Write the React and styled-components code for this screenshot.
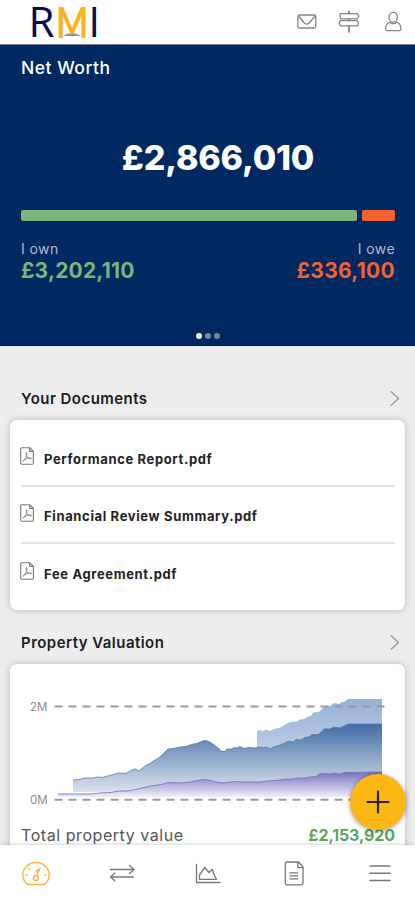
import React from 'react';
import styled, { createGlobalStyle } from 'styled-components';

const GlobalStyle = createGlobalStyle`
  * {
    box-sizing: border-box;
  }
  body {
    margin: 0;
    font-family: Inter, 'Liberation Sans', sans-serif;
    background: #ededed;
  }
`;
const Screen = styled.div`
  position: relative;
  display: flex;
  flex-direction: column;
  width: 415px;
  height: 900px;
  overflow: hidden;
  background: #ededed;
`;
const Header = styled.header`
  flex: none;
  display: flex;
  align-items: center;
  justify-content: space-between;
  height: 45px;
  padding: 0 10px 0 30px;
  background: #fff;
  border-bottom: 1px solid #777589;
`;
const LogoMark = styled.svg`
  display: block;
  overflow: visible;
  font-family: 'Open Sans', sans-serif;
  font-size: 41.5px;
  fill: #0d0a4e;
`;
const HeaderIcons = styled.div`
  display: flex;
  align-items: center;
  gap: 20px;
`;
const Icon = styled.svg`
  display: block;
  flex: none;
  fill: none;
  stroke: ${({ $color }) => $color || '#858585'};
  stroke-width: ${({ $weight }) => $weight || 1.3};
  stroke-linecap: round;
  stroke-linejoin: round;
`;
const Hero = styled.section`
  flex: none;
  display: flex;
  flex-direction: column;
  height: 301px;
  padding: 12px 20px 6px 21px;
  color: #fff;
  background: #002861;
  border-bottom: 1px solid #00104d;
`;
const HeroTitle = styled.div`
  font-size: 17.5px;
  font-weight: 500;
  line-height: 22px;
  letter-spacing: 0.5px;
`;
const NetWorth = styled.div`
  margin-top: 58px;
  padding-left: 20px;
  font-size: 34px;
  font-weight: 800;
  line-height: 42px;
  letter-spacing: -0.2px;
  text-align: center;
`;
const Bar = styled.div`
  display: flex;
  gap: 5px;
  margin-top: 31px;
`;
const BarPart = styled.div`
  flex: ${({ $share }) => $share} 0 0;
  height: 11px;
  border-radius: 2px;
  background: ${({ $color }) => $color};
`;
const Totals = styled.div`
  display: flex;
  justify-content: space-between;
  margin-top: 18px;
`;
const Total = styled.div`
  text-align: ${({ $align }) => $align};
`;
const TotalLabel = styled.div`
  font-size: 14px;
  line-height: 20px;
  letter-spacing: 0.4px;
  color: #b3bbd0;
`;
const TotalValue = styled.div`
  font-size: 21px;
  font-weight: 700;
  line-height: 24px;
  letter-spacing: ${({ $spacing }) => $spacing};
  color: ${({ $color }) => $color};
`;
const Dots = styled.div`
  display: flex;
  justify-content: center;
  gap: 3px;
  margin-top: auto;
`;
const Dot = styled.span`
  width: 6px;
  height: 6px;
  border-radius: 50%;
  background: ${({ $active }) => ($active ? '#fff' : '#7a8596')};
`;
const SectionHeader = styled.div`
  flex: none;
  display: flex;
  align-items: center;
  justify-content: space-between;
  height: 24px;
  margin-top: ${({ $top }) => $top};
  padding: 0 15px 0 21px;
`;
const SectionTitle = styled.h2`
  margin: 0;
  font-size: 15px;
  font-weight: 600;
  letter-spacing: 0.46px;
  color: #1c1c1f;
`;
const Card = styled.div`
  flex: none;
  height: ${({ $height }) => $height};
  margin: 10px 10px 0;
  padding: 0 10px 0 11px;
  border-radius: 7px;
  background: #fff;
  box-shadow: 0 0 7px rgba(0, 0, 0, 0.22);
`;
const DocumentCard = styled(Card)`
  display: flex;
  flex-direction: column;
  padding-top: 9px;
`;
const DocumentRow = styled.div`
  display: flex;
  align-items: center;
  gap: 10px;
  height: 57.5px;
  border-bottom: 2px solid ${({ $last }) => ($last ? 'transparent' : '#e4e4e4')};

  svg {
    margin: 0 0 2px -1px;
  }
`;
const DocumentName = styled.span`
  padding-top: 4px;
  font-size: 13px;
  font-weight: 650;
  letter-spacing: 0.64px;
  color: #222226;
`;
const Chart = styled.svg`
  display: block;
  margin: 0 -10px 0 -11px;
`;
const ChartLabel = styled.text`
  font-size: 11.5px;
  fill: #8c8c8c;
`;
const ValueRow = styled.div`
  display: flex;
  justify-content: space-between;
  align-items: center;
  height: 24px;
`;
const ValueLabel = styled.span`
  font-size: 16px;
  letter-spacing: 0.56px;
  color: #555;
`;
const ValueAmount = styled.span`
  font-size: 16px;
  font-weight: 650;
  letter-spacing: -0.1px;
  color: #5ba65c;
`;
const AddButton = styled.button`
  position: absolute;
  right: 9px;
  bottom: 70px;
  display: flex;
  align-items: center;
  justify-content: center;
  width: 56px;
  height: 56px;
  padding: 0;
  border: none;
  border-radius: 50%;
  background: #fdb714;
  box-shadow: 0 1px 5px rgba(0, 0, 0, 0.4);
`;
const TabBar = styled.nav`
  position: absolute;
  left: 0;
  right: 0;
  bottom: 0;
  display: flex;
  align-items: center;
  justify-content: space-between;
  height: 55px;
  padding: 2px 21px 0 22px;
  background: #fff;
  box-shadow: 0 0 4px rgba(0, 0, 0, 0.25);
`;

const documents = ['Performance Report.pdf', 'Financial Review Summary.pdf', 'Fee Agreement.pdf'];

// upper edges of the three areas
const equity =
  '257,731 259,730 263,731 266,729.5 270,731 274,729 279,728 283,726 286,724 290,722 297,721.5 300,719.5 304,719 308,716.5 311,716 313,712.5 319,712 322,709 325,706.5 330,706 334,703 339,704 342,702 344,702 348,699 382,699';
const value =
  '73,780 80,779.5 85,778 94,778 97,777 102,777.5 108,776 112,775 118,773 126,773.5 130,771 135,769 139,771 145,766 149,764 155,760 160,757 164,753 168,749 173,748.5 180,747 186,746.5 193,744 197,743.5 204,740.5 208,741 213,744 218,748 222,751.5 225,751.5 227,749 232,749 234,747.5 237,748 240,746.5 244,748.5 249,747.5 255,748 260,747 263,748 267,747 270,749 274,747 280,745 286,742.5 288,741 293,742 296,739.5 301,740 305,737.5 309,737 312,734.5 318,734.5 322,731.5 324,729 330,729 334,727 340,728 344,726 348,724 382,724';
const debt =
  '58,794 90,794 100,793 110,792.5 120,791 128,791 136,789.5 142,788 150,786 158,785 163,784 168,782.5 180,783 190,782 197,780.5 205,779.5 211,780.5 216,782 223,783 230,782 235,781.5 240,782 250,782 260,782 268,781 280,780 288,779 293,779 298,778 304,778 310,777 316,776.5 319,774 325,773.5 329,774 334,773 340,774 344,772.5 382,772';

const Logo = () => (
  <LogoMark width="70" height="44" viewBox="30 0 70 44">
    <text x="28.5" y="37.3" textLength="26" lengthAdjust="spacingAndGlyphs">R</text>
    <text x="56" y="38" fontFamily="Lato" fontSize="42.5" fontWeight="700" fill="#fbb21c" textLength="32.4" lengthAdjust="spacingAndGlyphs">M</text>
    <text x="88.5" y="37.3" fontWeight="500">I</text>
    <path d="M63 36.300Q68 32 71.500 34.300Q76 32 81 36.300Q76 35.300 72 36.300Q68 35.300 63 36.300Z" fill="#8d8d93" />
  </LogoMark>
);

const Chevron = () => (
  <Icon width="10" height="17" viewBox="0 0 10 17" $color="#999" $weight={1.4}>
    <path d="M1.2 1.8 8.5 8.5 1.2 15.2" />
  </Icon>
);

const PdfIcon = () => (
  <Icon width="14" height="18" viewBox="0 0 14 18" $color="#777" $weight={1.1}>
    <path d="M2 .7h7.800l3.600 3.600v11.800q0 1.200-1.200 1.200H2q-1.300 0-1.300-1.200V2Q.7.7 2 .7ZM9.700.8v3.600h3.600" />
    <path d="M3.200 14c2.200-1.200 4-4.200 3.700-7.700-.1-1-1.200-.8-1 .4.500 3 2.300 4.800 5 5.200 1 .1.800-1-.3-1-2.600 0-5 .7-7.400 3.100Z" strokeWidth=".8" />
  </Icon>
);

const PropertyChart = () => (
  <Chart width="395" height="159" viewBox="10 664 395 159">
    <defs>
      <linearGradient id="equity" x1="0" y1="699" x2="0" y2="748" gradientUnits="userSpaceOnUse">
        <stop offset="0" stopColor="#97b1d7" />
        <stop offset="1" stopColor="#b9cbe4" />
      </linearGradient>
      <linearGradient id="value" x1="0" y1="724" x2="0" y2="796" gradientUnits="userSpaceOnUse">
        <stop offset="0" stopColor="#436ca5" />
        <stop offset="1" stopColor="#e3eaf1" />
      </linearGradient>
      <linearGradient id="debt" x1="0" y1="772" x2="0" y2="798" gradientUnits="userSpaceOnUse">
        <stop offset="0" stopColor="#7672be" />
        <stop offset="1" stopColor="#f6f3fc" />
      </linearGradient>
    </defs>
    <polygon points={`${equity} 382,775 257,775`} fill="url(#equity)" />
    <polygon points={`${value} 382,790 73,792`} fill="url(#value)" />
    <polygon points={`${debt} 382,797 58,797`} fill="url(#debt)" />
    <polyline points={value} fill="none" stroke="#5878a8" strokeWidth=".8" />
    <polyline points={debt} fill="none" stroke="#7975c0" strokeWidth=".9" />
    <path d="M54.5 706.5H386M54.5 799.8H386" stroke="#999" strokeWidth="2" strokeDasharray="8 6" />
    <ChartLabel x="30" y="711">2M</ChartLabel>
    <ChartLabel x="30" y="804">0M</ChartLabel>
  </Chart>
);

const App = () => (
  <Screen>
    <GlobalStyle />
    <Header>
      <Logo />
      <HeaderIcons>
        <Icon width="20" height="16" viewBox="0 0 20 16">
          <rect x=".8" y="1" width="18" height="13" rx="1.5" />
          <path d="M2 2.500 7.300 9Q9.800 11.200 12.300 9L17.600 2.500" />
        </Icon>
        <Icon width="24" height="24" viewBox="0 0 24 24">
          <path d="M12 1.300v2.400M12 9v1.500M12 16v6" stroke="#555" />
          <path d="M3.500 3.600h16.800l1.700 2.600-1.700 2.600H3.500Q2.300 6.200 3.500 3.600ZM20.500 10.600H3.700L2 13.200l1.700 2.600h16.800Q21.700 13.200 20.500 10.600Z" />
        </Icon>
        <Icon width="24" height="22" viewBox="0 0 24 22">
          <ellipse cx="12.200" cy="6.200" rx="4.200" ry="4.900" />
          <path d="M8.800 11.200C6 12 4.700 14.500 4.700 18.200q0 1.500 1.500 1.500h12.200q1.500 0 1.500-1.500c0-3.700-1.300-6.200-4.200-7Q12.200 14 8.800 11.200Z" />
        </Icon>
      </HeaderIcons>
    </Header>
    <Hero>
      <HeroTitle>Net Worth</HeroTitle>
      <NetWorth>£2,866,010</NetWorth>
      <Bar>
        <BarPart $share={336} $color="#7bb77c" />
        <BarPart $share={33} $color="#f2632f" />
      </Bar>
      <Totals>
        <Total $align="left">
          <TotalLabel>I own</TotalLabel>
          <TotalValue $color="#78b77b" $spacing="0.2px">£3,202,110</TotalValue>
        </Total>
        <Total $align="right">
          <TotalLabel>I owe</TotalLabel>
          <TotalValue $color="#f2632f" $spacing="0.3px">£336,100</TotalValue>
        </Total>
      </Totals>
      <Dots>
        <Dot $active />
        <Dot />
        <Dot />
      </Dots>
    </Hero>
    <SectionHeader $top="40px">
      <SectionTitle>Your Documents</SectionTitle>
      <Chevron />
    </SectionHeader>
    <DocumentCard $height="190px">
      {documents.map((name, i) => (
        <DocumentRow key={name} $last={i === documents.length - 1}>
          <PdfIcon />
          <DocumentName>{name}</DocumentName>
        </DocumentRow>
      ))}
    </DocumentCard>
    <SectionHeader $top="20px">
      <SectionTitle>Property Valuation</SectionTitle>
      <Chevron />
    </SectionHeader>
    <Card $height="260px">
      <PropertyChart />
      <ValueRow>
        <ValueLabel>Total property value</ValueLabel>
        <ValueAmount>£2,153,920</ValueAmount>
      </ValueRow>
    </Card>
    <AddButton aria-label="Add">
      <Icon width="24" height="24" viewBox="0 0 24 24" $color="#2b2412" $weight={2.2}>
        <path d="M12 1.500v21M1.500 12h21" />
      </Icon>
    </AddButton>
    <TabBar>
      <Icon width="28" height="28" viewBox="0 0 28 28" $color="#fbb43a" $weight={1.4}>
        <path d="M4.500 23.500Q.8 20 .8 15A13.200 12.500 0 0 1 27.200 15Q27.200 20 23.500 23.500Q22.500 24.500 21 24.500H7Q5.500 24.500 4.500 23.500Z" />
        <circle cx="13.800" cy="18" r="2.500" />
        <path d="M14.600 15.500 18 8.500M14 11l2.500-1M4 15h1M23 15h1M6.500 8.500l.7.700" />
      </Icon>
      <Icon width="28" height="28" viewBox="0 0 28 28" $color="#777">
        <path d="M2.500 9.500H26M21.500 5.500l4.500 4-4.500 4M25.500 17H2.500M7 13.100l-4.500 3.900L7 20.900" />
      </Icon>
      <Icon width="28" height="28" viewBox="0 0 28 28" $color="#777">
        <path d="M2.500 4.500v18H26M5.500 19.300V15L10.800 7.500 14.800 12.500 18.300 9.500l2 5.500 2.200 4.300Z" />
      </Icon>
      <Icon width="28" height="28" viewBox="0 0 28 28" $color="#777">
        <path d="M7 2h11.500l4.500 5v16q0 1.800-1.800 1.800H7q-1.700 0-1.700-1.800V3.700Q5.300 2 7 2ZM17.800 2.200v5.500h5M9.800 12.800h8M9.800 15.800h8M9.800 18.800h8" />
      </Icon>
      <Icon width="28" height="28" viewBox="0 0 28 28" $color="#777" $weight={1.5}>
        <path d="M4 6h20M4 13.300h20M4 20.600h20" />
      </Icon>
    </TabBar>
  </Screen>
);

export default App;
